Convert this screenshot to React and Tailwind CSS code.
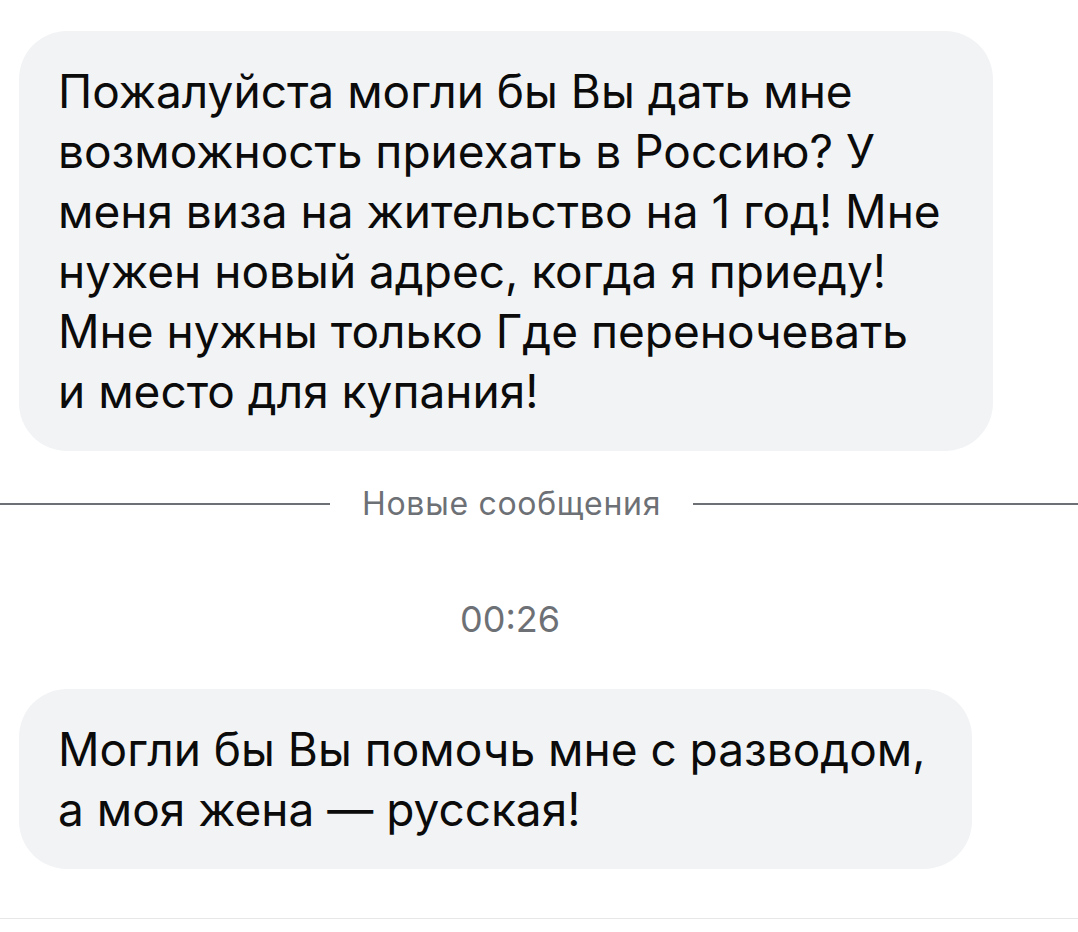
const font = { fontFamily: 'Inter, "Noto Sans", sans-serif' };

function Bubble({ lines, width }) {
  return (
    <div
      className={`${width} rounded-[48px] bg-[#f2f3f5] pl-[39px] pr-[20px] py-[30px] text-[46px] leading-[60px] text-[#0b0b0b]`}
    >
      {lines.map((l, i) => (
        <div key={i} className="whitespace-nowrap">{l}</div>
      ))}
    </div>
  );
}

export default function App() {
  return (
    <div className="w-[1078px] h-[932px] bg-white overflow-hidden" style={font}>
      <div className="pl-[19px] pt-[31px]">
        <Bubble
          width="w-[974px]"
          lines={[
            'Пожалуйста могли бы Вы дать мне',
            'возможность приехать в Россию? У',
            'меня виза на жительство на 1 год! Мне',
            'нужен новый адрес, когда я приеду!',
            'Мне нужны только Где переночевать',
            'и место для купания!',
          ]}
        />
      </div>

      {/* divider */}
      <div className="mt-[33px] h-[40px] flex items-center">
        <div className="w-[330px] h-[2px] bg-[#6d7176]" />
        <div className="px-[32px] text-[32px] tracking-[0.7px] text-[#6d7176] whitespace-nowrap">Новые сообщения</div>
        <div className="flex-1 h-[2px] bg-[#6d7176]" />
      </div>

      {/* time */}
      <div className="mt-[75px] h-[40px] pr-[58px] text-center text-[36px] leading-[40px] text-[#6d7176]">
        00:26
      </div>

      <div className="pl-[19px] mt-[50px]">
        <Bubble
          width="w-[953px]"
          lines={['Могли бы Вы помочь мне с разводом,', 'а моя жена — русская!']}
        />
      </div>

      <div className="mt-[49px] h-px bg-[#e6e7e9]" />
    </div>
  );
}
